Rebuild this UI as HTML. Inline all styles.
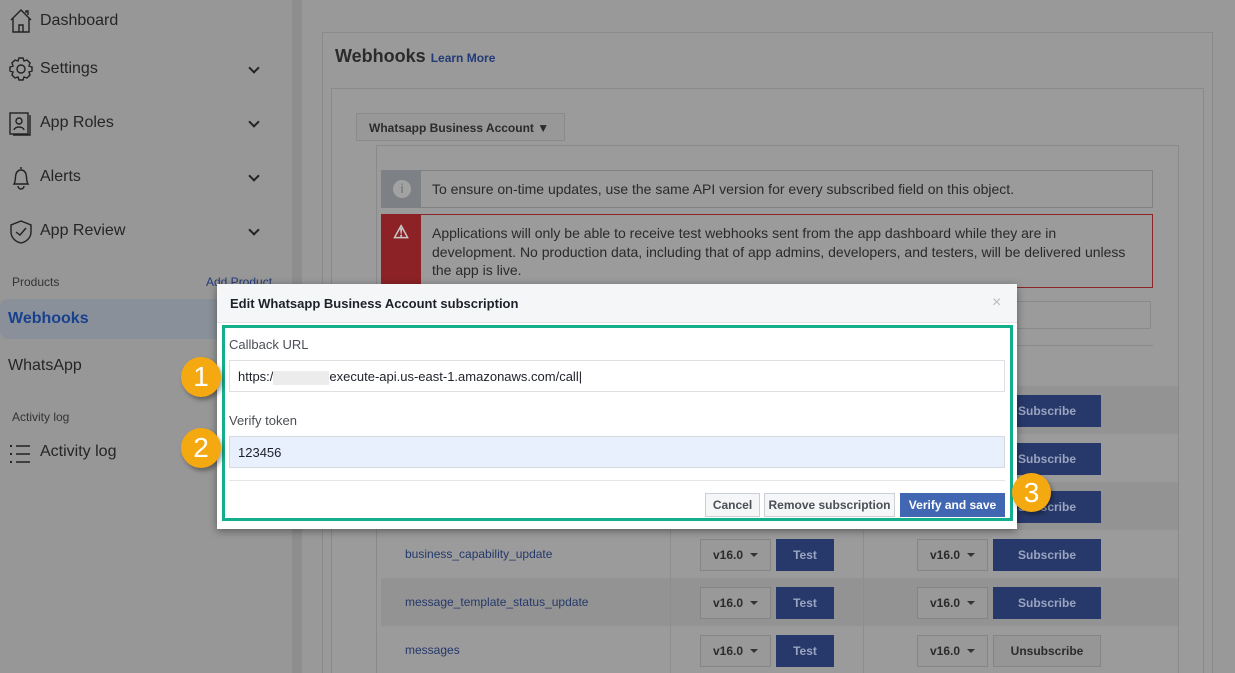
<!DOCTYPE html>
<html><head><meta charset="utf-8"><style>
*{box-sizing:border-box;margin:0;padding:0}
html{width:1235px;height:673px;overflow:hidden;background:#999}
body{width:1235px;height:673px;overflow:hidden;background:#999;font-family:"Liberation Sans",Arial,sans-serif;position:relative}
.a{position:absolute}
.side{left:0;top:0;width:292px;height:673px;background:#979797}
.strip{left:292px;top:0;width:10px;height:673px;background:#8e8e8e}
.nav{position:absolute;left:40px;font-size:16px;color:#252525}
.chev{position:absolute;left:250px;width:8px;height:8px;border-right:2px solid #222;border-bottom:2px solid #222;transform:rotate(45deg)}
.ic{position:absolute;left:9px}
.box{border:1px solid #8a8a8a}
.nb{border-bottom:none}
.row{position:absolute;left:381px;width:797px;height:48px}
.fname{position:absolute;left:24px;top:15px;font-size:12px;color:#24386a}
.ver{position:absolute;width:71px;height:32px;border:1px solid #858585;background:#999;font-size:12px;font-weight:bold;color:#2b2b2b;line-height:30px;padding-left:12px}
.ver:after{content:"";position:absolute;left:49px;top:13px;border:4px solid transparent;border-top:4px solid #333}
.btn{position:absolute;height:32px;background:#27396b;color:#9aa5bf;font-size:12px;font-weight:bold;text-align:center;line-height:32px}
.badge{position:absolute;width:40px;height:40px;border-radius:50%;background:#f5a911;color:#fff;font-size:28px;text-align:center;line-height:40px;box-shadow:2px 3px 4px rgba(0,0,0,.35)}
.mb{position:absolute;top:493px;height:24px;border:1px solid #ccd0d5;background:#f5f6f7;font-size:12px;font-weight:bold;color:#4b4f56;text-align:center;line-height:22px}
</style></head><body>
<div class="a side"></div><div class="a strip"></div>
<svg class="ic" style="top:8px" width="24" height="26" viewBox="0 0 24 26" fill="none" stroke="#222" stroke-width="1.4"><path d="M2 12 L12 2 L22 12 M4 10 V24 H20 V10 M10 24 V17 H14 V24 M17 5 V3 H19 V7"/></svg>
<div class="nav" style="top:12px">Dashboard</div>
<svg class="ic" style="top:57px" width="24" height="24" viewBox="0 0 24 24" fill="none" stroke="#222" stroke-width="1.4"><circle cx="12" cy="12" r="4"/><path d="M10 1h4l1 3 3-1 3 3-1 3 3 1v4l-3 1 1 3-3 3-3-1-1 3h-4l-1-3-3 1-3-3 1-3-3-1v-4l3-1-1-3 3-3 3 1z"/></svg>
<div class="nav" style="top:60px">Settings</div><div class="chev" style="top:64px"></div>
<svg class="ic" style="top:111px" width="24" height="26" viewBox="0 0 24 26" fill="none" stroke="#222" stroke-width="1.4"><rect x="1" y="2" width="18" height="21"/><path d="M21 4v20H4"/><circle cx="10" cy="10" r="3"/><path d="M5 19c1-4 9-4 10 0"/></svg>
<div class="nav" style="top:114px">App Roles</div><div class="chev" style="top:118px"></div>
<svg class="ic" style="top:165px" width="24" height="26" viewBox="0 0 24 26" fill="none" stroke="#222" stroke-width="1.4"><path d="M12 2v2M5 19c2-3 1-7 2-10 1-3 3-4 5-4s4 1 5 4c1 3 0 7 2 10z M9 21a3 3 0 0 0 6 0"/></svg>
<div class="nav" style="top:168px">Alerts</div><div class="chev" style="top:172px"></div>
<svg class="ic" style="top:219px" width="24" height="26" viewBox="0 0 24 26" fill="none" stroke="#222" stroke-width="1.4"><path d="M12 2l10 4v7c0 6-5 10-10 11C7 23 2 19 2 13V6z"/><path d="M7 13l4 3 6-7"/></svg>
<div class="nav" style="top:222px">App Review</div><div class="chev" style="top:226px"></div>
<div class="a" style="left:12px;top:275px;font-size:12px;color:#333">Products</div>
<div class="a" style="left:206px;top:275px;font-size:12px;color:#253a7a">Add Product</div>
<div class="a" style="left:0;top:299px;width:292px;height:40px;background:#8a9099;border-radius:8px 0 0 8px"></div>
<div class="a" style="left:8px;top:310px;font-size:16px;font-weight:bold;color:#17408f">Webhooks</div>
<div class="nav" style="left:8px;top:357px">WhatsApp</div>
<div class="a" style="left:12px;top:410px;font-size:12px;color:#333">Activity log</div>
<svg class="ic" style="top:443px" width="24" height="22" viewBox="0 0 24 22" fill="#222" stroke="#222" stroke-width="1.4"><rect x="1" y="2" width="2" height="2" stroke="none"/><rect x="1" y="10" width="2" height="2" stroke="none"/><rect x="1" y="18" width="2" height="2" stroke="none"/><path d="M7 3h14M7 11h14M7 19h14"/></svg>
<div class="nav" style="top:443px">Activity log</div>

<div class="a box nb" style="left:322px;top:32px;width:891px;height:641px;background:#9a9a9a"></div>
<div class="a" style="left:335px;top:46px;font-size:18px;font-weight:bold;color:#2b2b2b">Webhooks <span style="font-size:12px;color:#233a78">Learn More</span></div>
<div class="a box nb" style="left:331px;top:88px;width:873px;height:585px;background:#9b9b9b"></div>
<div class="a box" style="left:356px;top:113px;width:209px;height:28px;background:#989898;font-size:12px;font-weight:bold;color:#2b2b2b;padding:7px 12px">Whatsapp Business Account &#9660;</div>
<div class="a box nb" style="left:376px;top:145px;width:803px;height:528px"></div>
<div class="a" style="left:381px;top:170px;width:772px;height:38px;border:1px solid #818181;background:#9b9b9b"></div>
<div class="a" style="left:381px;top:170px;width:40px;height:38px;background:#7d8185"></div>
<div class="a" style="left:393px;top:180px;width:18px;height:18px;border-radius:50%;background:#a2a2a2;color:#7d8185;font-size:13px;font-weight:bold;text-align:center;line-height:18px">i</div>
<div class="a" style="left:432px;top:181px;font-size:14px;color:#2a2a2a">To ensure on-time updates, use the same API version for every subscribed field on this object.</div>
<div class="a" style="left:381px;top:214px;width:772px;height:74px;border:1px solid #8c2525;background:#9b9b9b"></div>
<div class="a" style="left:381px;top:214px;width:40px;height:74px;background:#8c2226"></div>
<div class="a" style="left:393px;top:222px;font-size:18px;font-weight:bold;color:#c8c8c8">&#9888;</div>
<div class="a" style="left:432px;top:224px;width:710px;font-size:14px;line-height:18.5px;color:#2a2a2a">Applications will only be able to receive test webhooks sent from the app dashboard while they are in development. No production data, including that of app admins, developers, and testers, will be delivered unless the app is live.</div>
<div class="a box" style="left:854px;top:301px;width:297px;height:28px"></div>
<div class="a" style="left:381px;top:345px;width:772px;height:1px;background:#8a8a8a"></div>

<div class="row" style="top:386px;background:#939393"></div>
<div class="row" style="top:482px;background:#939393"></div>
<div class="row" style="top:578px;background:#939393"></div>
<div class="a" style="left:670px;top:530px;width:1px;height:143px;background:#8e8e8e"></div>
<div class="a" style="left:863px;top:530px;width:1px;height:143px;background:#8e8e8e"></div>
<div class="btn" style="left:993px;top:395px;width:108px">Subscribe</div>
<div class="btn" style="left:993px;top:443px;width:108px">Subscribe</div>
<div class="btn" style="left:993px;top:491px;width:108px">Subscribe</div>
<div class="a fname" style="left:405px;top:547px">business_capability_update</div>
<div class="ver" style="left:700px;top:539px">v16.0</div><div class="btn" style="left:776px;top:539px;width:58px">Test</div>
<div class="ver" style="left:917px;top:539px">v16.0</div><div class="btn" style="left:993px;top:539px;width:108px">Subscribe</div>
<div class="a fname" style="left:405px;top:595px">message_template_status_update</div>
<div class="ver" style="left:700px;top:587px">v16.0</div><div class="btn" style="left:776px;top:587px;width:58px">Test</div>
<div class="ver" style="left:917px;top:587px">v16.0</div><div class="btn" style="left:993px;top:587px;width:108px">Subscribe</div>
<div class="a fname" style="left:405px;top:643px">messages</div>
<div class="ver" style="left:700px;top:635px">v16.0</div><div class="btn" style="left:776px;top:635px;width:58px">Test</div>
<div class="ver" style="left:917px;top:635px">v16.0</div>
<div class="btn" style="left:993px;top:635px;width:108px;background:#969696;border:1px solid #858585;color:#2b2b2b;line-height:30px">Unsubscribe</div>

<div class="a" style="left:217px;top:284px;width:800px;height:245px;background:#fff;box-shadow:0 2px 8px rgba(0,0,0,.4)"></div>
<div class="a" style="left:217px;top:284px;width:800px;height:39px;background:#f5f6f7;border-bottom:1px solid #e5e5e5"></div>
<div class="a" style="left:230px;top:296px;font-size:13px;font-weight:bold;color:#1d2129">Edit Whatsapp Business Account subscription</div>
<div class="a" style="left:992px;top:294px;font-size:16px;color:#bbb">×</div>
<div class="a" style="left:222px;top:325px;width:791px;height:196px;border:3px solid #13ae8c"></div>
<div class="a" style="left:229px;top:337px;font-size:13px;color:#4b4f56">Callback URL</div>
<div class="a" style="left:229px;top:360px;width:776px;height:32px;border:1px solid #dddfe2;background:#fff"></div>
<div class="a" style="left:238px;top:369px;font-size:13px;color:#1d2129">https:/<span style="display:inline-block;width:56px;height:14px;background:#ececec;vertical-align:middle"></span>execute-api.us-east-1.amazonaws.com/call|</div>
<div class="a" style="left:229px;top:413px;font-size:13px;color:#4b4f56">Verify token</div>
<div class="a" style="left:229px;top:436px;width:776px;height:32px;border:1px solid #d5d9e0;background:#e8f0fe"></div>
<div class="a" style="left:238px;top:445px;font-size:13px;color:#1d2129">123456</div>
<div class="a" style="left:229px;top:480px;width:776px;height:1px;background:#e5e5e5"></div>
<div class="mb" style="left:705px;width:55px">Cancel</div>
<div class="mb" style="left:764px;width:131px">Remove subscription</div>
<div class="mb" style="left:900px;width:105px;background:#4267b2;border-color:#4267b2;color:#fff">Verify and save</div>

<div class="badge" style="left:181px;top:357px">1</div>
<div class="badge" style="left:181px;top:428px">2</div>
<div class="badge" style="left:1012px;top:473px;width:39px;height:39px">3</div>
</body></html>
